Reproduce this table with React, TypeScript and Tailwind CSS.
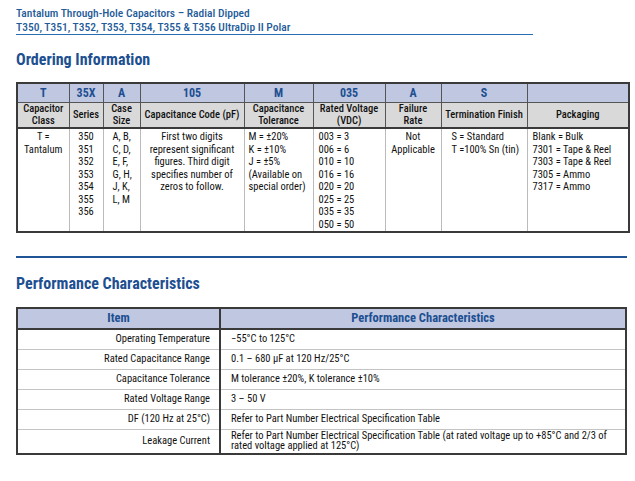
const font = { fontFamily: '"Roboto Condensed", "Liberation Sans Narrow", "DejaVu Sans Condensed", Roboto, sans-serif' };

const codes = ['T', '35X', 'A', '105', 'M', '035', 'A', 'S', ''];
const labels = [
  ['Capacitor', 'Class'],
  ['Series'],
  ['Case', 'Size'],
  ['Capacitance Code (pF)'],
  ['Capacitance', 'Tolerance'],
  ['Rated Voltage', '(VDC)'],
  ['Failure', 'Rate'],
  ['Termination Finish'],
  ['Packaging'],
];
const widths = ['w-[52px]', 'w-[34px]', 'w-[37px]', 'w-[104px]', 'w-[69px]', 'w-[72px]', 'w-[56px]', 'w-[86px]', 'w-[102px]'];

const perf = [
  ['Operating Temperature', '−55°C to 125°C'],
  ['Rated Capacitance Range', '0.1 – 680 µF at 120 Hz/25°C'],
  ['Capacitance Tolerance', 'M tolerance ±20%, K tolerance ±10%'],
  ['Rated Voltage Range', '3 – 50 V'],
  ['DF (120 Hz at 25°C)', 'Refer to Part Number Electrical Specification Table'],
  ['Leakage Current', 'Refer to Part Number Electrical Specification Table (at rated voltage up to +85°C and 2/3 of rated voltage applied at 125°C)'],
];

function Lines({ items }: { items: string[] }) {
  return (
    <div className="flex flex-col">
      {items.map((t, i) => (
        <span key={i}>{t}</span>
      ))}
    </div>
  );
}

export default function App() {
  return (
    <div className="w-[635px] h-[481px] bg-white text-[#111] overflow-hidden" style={font}>
      <div className="pl-[16px] pt-[6px]">
        <div className="w-[517px] border-b border-[#2a6db0] text-[#1f5c99] text-[11.5px] leading-[14px] font-medium">
          <div>Tantalum Through-Hole Capacitors – Radial Dipped</div>
          <div>T350, T351, T352, T353, T354, T355 &amp; T356 UltraDip II Polar</div>
        </div>
        <h2 className="mt-[15px] text-[16px] leading-[20px] font-bold text-[#1d4f91]">Ordering Information</h2>
      </div>

      <div className="pl-[16px] mt-[12px]">
        <table className="table-fixed border-collapse border-2 border-[#3a3a3a] text-center">
          <colgroup>
            {widths.map((w, i) => (
              <col key={i} className={w} />
            ))}
          </colgroup>
          <thead>
            <tr className="h-[19px] bg-[#bfc7e1] text-[#1d4f91] text-[12px] font-bold">
              {codes.map((c, i) => (
                <th key={i} className="border border-[#555] leading-[14px]">{c}</th>
              ))}
            </tr>
            <tr className="h-[26px] bg-[#d9d9d9] text-[10.5px] text-[#111]">
              {labels.map((l, i) => (
                <th key={i} className="border border-[#555] border-b-2 border-b-[#3a3a3a] leading-[11.5px] font-medium">
                  <Lines items={l} />
                </th>
              ))}
            </tr>
          </thead>
          <tbody className="text-[10.5px] leading-[12.5px] align-top">
            <tr className="h-[102px]">
              <td className="border-r border-[#bbb] pt-[2px]">
                <Lines items={['T =', 'Tantalum']} />
              </td>
              <td className="border-r border-[#bbb] pt-[2px]">
                <Lines items={['350', '351', '352', '353', '354', '355', '356']} />
              </td>
              <td className="border-r border-[#bbb] pt-[2px] text-left pl-[9px]">
                <Lines items={['A, B,', 'C, D,', 'E, F,', 'G, H,', 'J, K,', 'L, M']} />
              </td>
              <td className="border-r border-[#bbb] pt-[2px]">
                <Lines items={['First two digits', 'represent significant', 'figures. Third digit', 'specifies number of', 'zeros to follow.']} />
              </td>
              <td className="border-r border-[#bbb] pt-[2px] text-left pl-[4px]">
                <Lines items={['M = ±20%', 'K = ±10%', 'J = ±5%', '(Available on', 'special order)']} />
              </td>
              <td className="border-r border-[#bbb] pt-[2px] text-left pl-[5px]">
                <Lines items={['003 = 3', '006 = 6', '010 = 10', '016 = 16', '020 = 20', '025 = 25', '035 = 35', '050 = 50']} />
              </td>
              <td className="border-r border-[#bbb] pt-[2px]">
                <Lines items={['Not', 'Applicable']} />
              </td>
              <td className="border-r border-[#bbb] pt-[2px] text-left pl-[10px]">
                <Lines items={['S = Standard', 'T =100% Sn (tin)']} />
              </td>
              <td className="pt-[2px] text-left pl-[5px]">
                <Lines items={['Blank = Bulk', '7301 = Tape & Reel', '7303 = Tape & Reel', '7305 = Ammo', '7317 = Ammo']} />
              </td>
            </tr>
          </tbody>
        </table>
      </div>

      <div className="pl-[16px] mt-[23px]">
        <div className="w-[611px] border-b-2 border-[#1f5596]" />
        <h2 className="mt-[16px] text-[16px] leading-[20px] font-bold text-[#1d4f91]">Performance Characteristics</h2>
      </div>

      <div className="pl-[16px] mt-[13px]">
        <table className="table-fixed border-collapse border-2 border-[#3a3a3a] w-[611px]">
          <colgroup>
            <col className="w-[203px]" />
            <col />
          </colgroup>
          <thead>
            <tr className="h-[21px] bg-[#bfc7e1] text-[#1d4f91] text-[12.5px] font-bold">
              <th className="border-r-2 border-[#3a3a3a] border-b-2">Item</th>
              <th className="border-b-2 border-[#3a3a3a]">Performance Characteristics</th>
            </tr>
          </thead>
          <tbody className="text-[10.5px] leading-[10.5px]">
            {perf.map(([k, v], i) => (
              <tr key={i} className={i === perf.length - 1 ? 'h-[25px]' : 'h-[20px]'}>
                <td className="text-right pr-[9px] border-r-2 border-[#3a3a3a] border-b border-b-[#c4c4c4]">{k}</td>
                <td className="pl-[10px] pr-[4px] border-b border-b-[#c4c4c4]">{v}</td>
              </tr>
            ))}
          </tbody>
        </table>
      </div>
    </div>
  );
}
